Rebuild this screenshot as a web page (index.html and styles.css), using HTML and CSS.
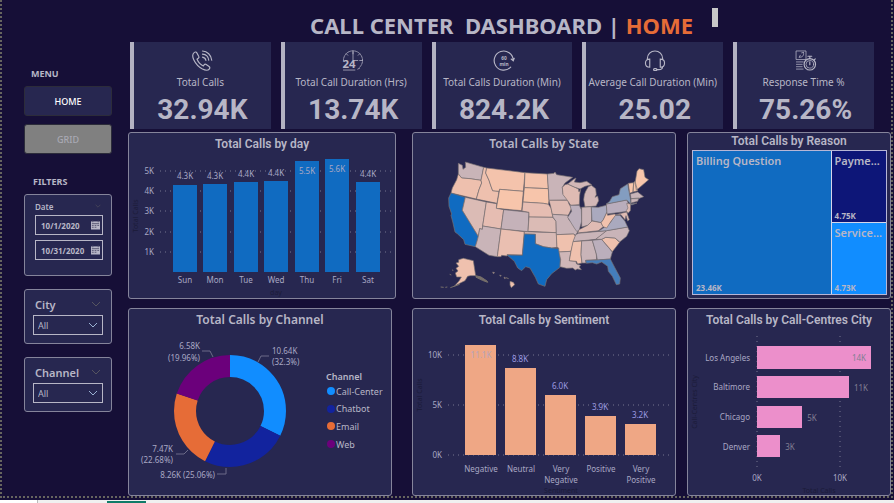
FILE: index.html
```html
<!DOCTYPE html>
<html lang="en">
<head>
<meta charset="utf-8">
<title>Call Center Dashboard</title>
<link rel="stylesheet" href="styles.css">
</head>
<body>
<div class="canvas">
  <aside class="sidebar">
    <h2 class="side-title">MENU</h2>
    <nav class="menu">
      <button class="menu-btn active" type="button">HOME</button>
      <button class="menu-btn" type="button">GRID</button>
    </nav>
    <h2 class="side-title filters-title">FILTERS</h2>
    <section class="filter date-filter">
      <div class="filter-head small"><span>Date</span><svg class="chev" viewBox="0 0 10 6"><path d="M1 1l4 4 4-4"/></svg></div>
      <div class="date-box first">
        <input type="text" aria-label="Start date" value="10/1/2020">
        <svg class="cal" viewBox="0 0 10 10"><path d="M0 1h10v9H0z"/><path class="cut" d="M2 0v2M8 0v2M1 3.500h8M1 5.500h2M4 5.500h2M7 5.500h2M1 7.500h2M4 7.500h2"/></svg>
      </div>
      <div class="date-box">
        <input type="text" aria-label="End date" value="10/31/2020">
        <svg class="cal" viewBox="0 0 10 10"><path d="M0 1h10v9H0z"/><path class="cut" d="M2 0v2M8 0v2M1 3.500h8M1 5.500h2M4 5.500h2M7 5.500h2M1 7.500h2M4 7.500h2"/></svg>
      </div>
    </section>
    <section class="filter">
      <div class="filter-head"><label for="city">City</label><svg class="chev" viewBox="0 0 10 6"><path d="M1 1l4 4 4-4"/></svg></div>
      <div class="select-box"><select id="city"><option>All</option></select><svg class="chev light" viewBox="0 0 10 6"><path d="M1 1l4 4 4-4"/></svg></div>
    </section>
    <section class="filter">
      <div class="filter-head"><label for="channel">Channel</label><svg class="chev" viewBox="0 0 10 6"><path d="M1 1l4 4 4-4"/></svg></div>
      <div class="select-box"><select id="channel"><option>All</option></select><svg class="chev light" viewBox="0 0 10 6"><path d="M1 1l4 4 4-4"/></svg></div>
    </section>
  </aside>

  <main class="main">
    <header class="top">
      <h1>CALL CENTER&nbsp; DASHBOARD | <span>HOME</span></h1>
      <i class="marker"></i>
    </header>

    <section class="kpis">
      <article class="kpi">
        <svg class="icon" viewBox="0 0 22 22"><path d="M3 2.500C1 4 .8 7 2.500 10.500c2 4.200 5 7.300 9 9.500 3.500 1.800 6 1.500 7.300-.3.700-1 .5-1.700-.4-2.400l-3-2.200c-.9-.6-1.600-.4-2.200.4l-.9 1.200C9.500 15.500 7 12.500 5.800 9.700l1.300-1c.8-.6 1-1.300.4-2.200L5.600 3C5 2 4 1.800 3 2.500zM11.500 1c5 .3 9.200 4.300 9.700 9.700M11.500 4.300c3.500.3 6.200 3 6.600 6.400M11.500 7.500c2 .3 3.300 1.600 3.600 3.400"/></svg>
        <h3>Total Calls</h3><strong>32.94K</strong>
      </article>
      <article class="kpi">
        <svg class="icon" viewBox="0 0 22 22"><path class="thin" stroke-dasharray="2 1" d="M1 11A10 10 0 1 1 18 18"/><path class="thin" d="M11 2v9h5M11 1v3M4 4l1.500 1.500M18 4l-1.500 1.500M21 11h-3M1 21h12M16 20l2-1"/><text class="icon-24" x="0" y="19">24</text></svg>
        <h3>Total Call Duration (Hrs)</h3><strong>13.74K</strong>
      </article>
      <article class="kpi">
        <svg class="icon" viewBox="0 0 22 22"><path d="M18 18a10 10 0 1 1 2.700-7.500M18.500 9.500l2.200 1.800 1-2.500"/><text class="icon-60" x="11" y="10">60</text><text class="icon-60" x="11" y="17">min</text></svg>
        <h3>Total Calls Duration (Min)</h3><strong>824.2K</strong>
      </article>
      <article class="kpi">
        <svg class="icon" viewBox="0 0 22 22"><path d="M3 10V9a8 8 0 0 1 16 0v1M5.500 9.500c-3 0-4.500 1.500-4.500 4s1.500 4.500 4.500 4.500zM16.500 9.500c3 0 4.500 1.500 4.500 4s-1.500 4.500-4.500 4.500zM19 17.500c0 2-1.500 3-4 3h-2"/><rect x="9.500" y="19.500" width="3.500" height="2" rx="1"/></svg>
        <h3>Average Call Duration (Min)</h3><strong>25.02</strong>
      </article>
      <article class="kpi">
        <svg class="icon" viewBox="0 0 22 22"><path class="thin" d="M1 1h10v9H1zM1 12.500h7M1 15h6M1 17.500h6M1 20h7M4 7.500c3 .5 5-1.500 4.500-4.500M4 7.500l1-2M6.500 3l2-.5"/><circle cx="15" cy="15" r="6"/><circle class="thin" cx="15" cy="15" r="4"/><path d="M15 9V7M13 6.500h4M15 12.500V15.500M19.500 10.500l1.200-1.200"/></svg>
        <h3>Response Time %</h3><strong>75.26%</strong>
      </article>
    </section>

    <section class="panels">
      <article class="panel by-day">
        <h2 class="din">Total Calls by day</h2>
        <svg class="chart" viewBox="129 155 266 143" role="img" aria-label="Total calls by day">
          <path class="grid" d="M160 171H392M160 191H392M160 211H392M160 232H392M160 252H392"/>
          <g class="axis end"><text x="154" y="174">5K</text><text x="154" y="194">4K</text><text x="154" y="214">3K</text><text x="154" y="235">2K</text><text x="154" y="255">1K</text></g>
          <g class="bars-blue"><rect x="173" y="185" width="24" height="87"/><rect x="203" y="184" width="24" height="88"/><rect x="234" y="182" width="24" height="90"/><rect x="264" y="181" width="24" height="91"/><rect x="295" y="161" width="24" height="111"/><rect x="325" y="159" width="24" height="113"/><rect x="356" y="182" width="24" height="90"/></g>
          <g class="axis mid"><text x="185" y="179">4.3K</text><text x="215" y="179">4.3K</text><text x="246" y="177">4.4K</text><text x="276" y="176">4.4K</text><text x="307" y="174">5.5K</text><text x="337" y="172">5.6K</text><text x="368" y="177">4.4K</text>
          <text x="185" y="283">Sun</text><text x="215" y="283">Mon</text><text x="246" y="283">Tue</text><text x="276" y="283">Wed</text><text x="307" y="283">Thu</text><text x="337" y="283">Fri</text><text x="368" y="283">Sat</text></g>
          <g class="faint"><text x="276" y="295">day</text><text transform="translate(138 216) rotate(-90)">Total Calls</text></g>
        </svg>
      </article>

      <article class="panel">
        <h2>Total Calls by State</h2>
        <svg class="chart map" viewBox="24 81 786 429" role="img" aria-label="Total calls by state">
          <path fill="#c9b4b8" d="M160 106l12 6 2 12 8-6-1-16 55 16-8 39-33-5-25-2-10-12z"/>
          <path fill="#eec0ae" d="M160 138l10 12 25 2 33 5 2 8-8 20-8 28-76-18 4-15 13-25z"/>
          <path fill="#106bc1" d="M138 195l43 13-9 39 48 78-4 15-5 16-31-7-4-14-18-17-8-6-6-27-6-23 2-4-8-23-1-25z"/>
          <path fill="#dbbbb5" d="M181 208l63 14-11 72-1 10-8-2-4 23-48-78z"/>
          <path fill="#eec0ae" d="M236 118l9 2-3 15 10 22 6 18 5 13 19 2-6 36-62-13 8-28 8-20-2-8z"/>
          <path fill="#f4c3ac" d="M245 120l115 14-5 56-71-6-2 6-19-2-5-13-6-18-10-22z"/>
          <path fill="#f7c5ab" d="M284 184l71 6-5 58-76-7z"/>
          <path fill="#e6bdb2" d="M244 222l31 5-1 14 22 4-8 58-55-9z"/>
          <path fill="#c5b2b9" d="M296 245l76 8-3 58-81-8z"/>
          <path fill="#c9b4b8" d="M233 294l55 9-11 83-25-4-41-26 5-16 4-15 4-23 8 2z"/>
          <path fill="#eabfb1" d="M288 303l70 8-6 70-46-1v4l-16-2-2 4h-11z"/>
          <path fill="#f4c3ac" d="M360 134l67 4 3 44-72-3z"/><path fill="#f7c5ab" d="M358 179l72 3 2 36-2 11-15-3-61-4z"/>
          <path fill="#e6bdb2" d="M354 222l61 4 15 3 8 11 6 28-72-1v-14l-21-4z"/><path fill="#dbbbb5" d="M372 267l72 1 9 12 1 34-85-4z"/>
          <path fill="#d7b9b5" d="M358 311l96 3 2 44-16 2-25-4-24-9v-28l-33-1z"/>
          <path fill="#106bc1" d="M358 318l33 1v28l24 9 25 4 22 2 4 33-1 23-25 19-15 18-5 20-20-7-9-20-16-28-13-4-12 12-12-8-10-20-22-19 46 1z"/>
          <path fill="#c9b4b8" d="M427 138l20-2 3-4 5 8 30 5 18 3-23 17-8 13 2 20 14 18-56 1-2-35z"/>
          <path fill="#dfbbb3" d="M432 217h56l4 11 8 12-8 18-4 4-46-3-4-19z"/><path fill="#c9b4b8" d="M442 259l46 3 4 13 16 17 12 16-8 14-6-4-52 2-1-40-9-12z"/>
          <path fill="#efc1ae" d="M454 320l52-2 6 7-7 17-7 28-36 2-1-12-5-2z"/><path fill="#cfb6b7" d="M462 372l36-2-5 28 19 2 3 8 12 4-4 5 6 8-12-2-6 3-8-6-18 1-20-5 2-21z"/>
          <path fill="#dfbbb3" d="M472 178l8-8 8-2 22 10 10 5 2 9 5-8-3 18-1 28-26 2-9-14-14-18z"/>
          <path fill="#d2b7b7" d="M488 168l18-14 7-4-5 12 17 2 20-4 15 10-20 5-15 8-15-5zM542 190l8-14 9-4 13 10 2 18-4 8 8-4 3 14-8 16-33 3-4-22 2-15z"/>
          <path fill="#bcafbc" d="M495 232h28l6 13 1 35-8 28-7 2-7-10-20-32 12-18z"/><path fill="#cbb5b8" d="M530 238l29-2 1 44-12 12-18 5z"/>
          <path fill="#aaa9be" d="M559 237l21 1 24-6 2 20-11 23-7 9-27-6z"/><path fill="#e0bbb3" d="M518 315l4-10 26-13 13-13 27 5 7 12-15 12z"/>
          <path fill="#c9b4b8" d="M512 320l8-4 85-8-20 17-13 9-68 7z"/><path fill="#efc1ae" d="M504 341l26-2-2 41 3 25-13 3-4-8-21-2 5-28z"/>
          <path fill="#c9b4b8" d="M530 339l32-2 12 41 1 17-33 2 1 8h-12l-3-25z"/><path fill="#bbafbc" d="M562 337l28-3 32 38-6 21-39 3-3-18z"/>
          <path fill="#447dbb" d="M542 397l35-1 39-3 14 27 16 30-2 18-10 2-12-25-12-15-2-15-18-13-15 6-13-4-18 2z"/>
          <path fill="#efc1ae" d="M590 334l12-6 28 2 14 13-22 28z"/><path fill="#c9b4b8" d="M572 334l33-26 63-11 5 11-8 17-21 17-14-12-28-2-12 6z"/>
          <path fill="#aaa9be" d="M580 310l15-10 20-15 15-23 15 0 15 18 8 17-63 11z"/><path fill="#f2c2ad" d="M588 284l7-9 11-23 2 10 20-4 5 2-15 20-13 20-11-4z"/>
          <path fill="#b9adbc" d="M604 228l61-12 8 16-5 18-62 8z"/><path fill="#839dc0" d="M614 220l8-14 20-6 4-18 22-14 5 27 4 23 1 10 18-3-16 6-15-15-61 12z"/>
          <path fill="#dfbbb3" d="M665 226l12 2-1 20-7 8-5-8 5-8zM630 260l35-8 8 23-5 4-5-16-3 12-12-15z"/>
          <path fill="#f7c5ab" d="M670 166l16-2-2 28-10 4zM686 164l4-4 8 28-14 4zM690 165l6-35 6-8 14 3 4 23 11 7-29 25-8 6z"/>
          <path fill="#c9b4b8" d="M676 198l22-6 18 14-16 6-22 0zM678 212l24-2-4 10-20 5z"/>
          <path fill="#efc1ae" d="M153 405l8-2 0-8 14-4 30 7 7 45-16 0-8 2-8 13-14 7-18 10 14-16 7-12-14 0-4-12 8-6-6-8 8-6zM315 460l10 3 4 7-10 9-4-8zM297 447l5 3-3 2zM284 441l5 2-3 2zM263 432l6 2-4 3z"/>
          <path class="isles" d="M107 477l9 1M121 478l6-1M136 479l28-10M212 443l16 4 18 12 2 4-16-6-20-10M134 439l5 2M141 426l4 1M303 449l8 3"/>
        </svg>
      </article>

      <article class="panel">
        <h2 class="din reason-title">Total Calls by Reason</h2>
        <div class="treemap">
          <div class="tile billing"><b>Billing Question</b><span>23.46K</span></div>
          <div class="tile payments"><b>Payme...</b><span>4.75K</span></div>
          <div class="tile service"><b>Service...</b><span>4.73K</span></div>
        </div>
      </article>

      <article class="panel by-channel">
        <h2>Total Calls by Channel</h2>
        <svg class="chart" viewBox="129 331 262 164" role="img" aria-label="Total calls by channel">
          <g class="donut" transform="rotate(-90 230 411)">
            <circle cx="230" cy="411" r="45" pathLength="100" stroke="#118dff" stroke-dasharray="32.3 67.7"/>
            <circle cx="230" cy="411" r="45" pathLength="100" stroke="#12239e" stroke-dasharray="25.06 74.94" stroke-dashoffset="-32.3"/>
            <circle cx="230" cy="411" r="45" pathLength="100" stroke="#e66c37" stroke-dasharray="22.68 77.32" stroke-dashoffset="-57.36"/>
            <circle cx="230" cy="411" r="45" pathLength="100" stroke="#6b007b" stroke-dasharray="19.96 80.04" stroke-dashoffset="-80.04"/>
          </g>
          <path class="leader" d="M258 362l3-6h8M202 351h8l3 6M176 454h8l4-4M217 474h9v-6"/>
          <g class="axis"><text x="272" y="354">10.64K</text><text x="272" y="365">(32.3%)</text></g>
          <g class="axis end"><text x="200" y="349">6.58K</text><text x="200" y="361">(19.96%)</text><text x="173" y="452">7.47K</text><text x="173" y="463">(22.68%)</text><text x="215" y="478">8.26K (25.06%)</text></g>
          <g class="legend"><text class="strong" x="326" y="380">Channel</text><text x="336" y="395">Call-Center</text><text x="336" y="412">Chatbot</text><text x="336" y="430">Email</text><text x="336" y="448">Web</text></g>
          <circle cx="331" cy="391" r="4" fill="#118dff"/><circle cx="331" cy="409" r="4" fill="#12239e"/><circle cx="331" cy="426" r="4" fill="#e66c37"/><circle cx="331" cy="444" r="4" fill="#6b007b"/>
        </svg>
      </article>

      <article class="panel">
        <h2 class="din">Total Calls by Sentiment</h2>
        <svg class="chart" viewBox="413 331 262 164" role="img" aria-label="Total calls by sentiment">
          <path class="grid" d="M448 355H672M448 405H672M448 455H672"/>
          <g class="axis end"><text x="442" y="358">10K</text><text x="442" y="408">5K</text><text x="442" y="458">0K</text></g>
          <g class="bars-peach"><rect x="465" y="345" width="31" height="110"/><rect x="505" y="368" width="31" height="87"/><rect x="545" y="395" width="31" height="60"/><rect x="585" y="416" width="31" height="39"/><rect x="625" y="424" width="31" height="31"/></g>
          <g class="axis mid"><text class="on-bar" x="481" y="358">11.1K</text><g class="violet"><text x="520" y="362">8.8K</text><text x="560" y="389">6.0K</text><text x="600" y="410">3.9K</text><text x="640" y="418">3.2K</text></g>
          <text x="481" y="472">Negative</text><text x="521" y="472">Neutral</text><text x="561" y="472">Very</text><text x="561" y="483">Negative</text><text x="601" y="472">Positive</text><text x="641" y="472">Very</text><text x="641" y="483">Positive</text></g>
          <g class="faint"><text x="561" y="493">Sentiment</text><text transform="translate(422 395) rotate(-90)">Total Calls</text></g>
        </svg>
      </article>

      <article class="panel">
        <h2 class="din">Total Calls by Call-Centres City</h2>
        <svg class="chart" viewBox="688 331 202 164" role="img" aria-label="Total calls by call-centre city">
          <path class="grid" d="M757 336V470M840 336V470"/>
          <g class="axis end"><text x="750" y="361">Los Angeles</text><text x="750" y="390">Baltimore</text><text x="750" y="420">Chicago</text><text x="750" y="450">Denver</text></g>
          <g class="bars-pink"><rect x="757" y="346" width="114" height="23"/><rect x="757" y="376" width="92" height="22"/><rect x="757" y="406" width="45" height="22"/><rect x="757" y="435" width="23" height="22"/></g>
          <g class="axis mid gray"><text x="859" y="361">14K</text><text x="861" y="391">11K</text><text x="812" y="421">5K</text><text x="790" y="450">3K</text></g>
          <g class="axis mid"><text x="757" y="481">0K</text><text x="840" y="481">10K</text></g>
          <g class="faint"><text x="819" y="493">Total Calls</text><text transform="translate(697 402) rotate(-90)">Call-Centres City</text></g>
        </svg>
      </article>
    </section>
  </main>
</div>
<footer class="tabs"><i class="tab-blank"></i><i class="tab-idle"></i><i class="tab-active"></i></footer>
</body>
</html>
```
FILE: styles.css
```css
* { box-sizing: border-box; }

body {
  margin: 0;
  min-height: 100vh;
  display: flex;
  flex-direction: column;
  background: #160f37;
  color: #b7b6c6;
  font-family: "Noto Sans", "Open Sans", sans-serif;
}

h1, h2, h3 { margin: 0; }

.canvas {
  flex: 1;
  display: flex;
  gap: 16px;
  margin: 0 1px 2px 0;
  padding-left: 22px;
  border: 2px dotted #66655f;
  border-top: 0;
}

/* Sidebar */
.sidebar { width: 88px; padding-top: 67px; flex: none; }
.side-title { margin-left: 7px; font-size: 9px; line-height: 14px; font-weight: 700; }
.menu { display: flex; flex-direction: column; gap: 8px; margin-top: 5px; }
.menu-btn {
  height: 30px;
  border: 1px solid #2c2c3a;
  border-radius: 3px;
  background: #808080;
  color: #a9a9b4;
  font: 500 9px "Noto Sans", sans-serif;
}
.menu-btn.active { background: #272750; color: #fff; }
.filters-title { margin: 21px 0 5px 9px; }

.filter {
  height: 55px;
  margin-bottom: 13px;
  padding: 5px 8px;
  border: 1px solid #85849b;
  border-radius: 3px;
  background: #272750;
}
.date-filter { height: 82px; }
.filter-head {
  display: flex;
  justify-content: space-between;
  align-items: center;
  padding: 0 2px;
  height: 18px;
  margin-bottom: 2px;
  font-size: 11px;
  font-weight: 600;
}
.filter-head.small { height: 12px; font-size: 8px; margin-bottom: 3px; }
.chev { width: 10px; height: 6px; fill: none; stroke: #55545f; }
.chev.light { stroke: #9bb3d4; }
.small .chev { width: 6px; height: 4px; }

.date-box {
  display: flex;
  align-items: center;
  height: 20px;
  margin: 0 0 5px 2px;
  padding: 0 2px 0 5px;
  border: 1px solid #b7b6c6;
}
.date-box input {
  flex: 1;
  min-width: 0;
  padding: 0;
  border: 0;
  background: none;
  color: inherit;
  font: 700 8px "Noto Sans", sans-serif;
}
.cal { width: 9px; height: 10px; flex: none; fill: #b7b6c6; }
.cal .cut { stroke: #55546f; stroke-width: 1; }

.select-box {
  display: flex;
  align-items: center;
  height: 20px;
  padding-right: 4px;
  border: 1px solid #b7b6c6;
}
.select-box select {
  flex: 1;
  min-width: 0;
  padding: 0 0 0 4px;
  border: 0;
  appearance: none;
  background: none;
  color: inherit;
  font: 9px "Noto Sans", sans-serif;
}

/* Header */
.main { flex: 1; min-width: 0; }
.top { position: relative; height: 42px; padding: 9px 16px 0 0; }
.top h1 { font-size: 22px; line-height: 32px; font-weight: 700; text-align: center; white-space: nowrap; }
.top h1 span { color: #e66c37; }
.marker { position: absolute; top: 8px; right: 173px; width: 6px; height: 19px; background: #c8c8c8; }

/* Headline figures */
.kpis {
  display: grid;
  grid-template-columns: repeat(5, 1fr);
  gap: 10px;
  padding: 0 17px 0 2px;
}
.kpi {
  height: 87px;
  display: flex;
  flex-direction: column;
  align-items: center;
  padding-top: 8px;
  border-left: 4px solid #b3b2c2;
  background: #272750;
}
.kpi h3 { margin: 4px 4px 0 0; font-size: 10px; line-height: 14px; font-weight: 400; white-space: nowrap; }
.kpi strong { margin-top: 2px; font: 700 28px/38px "Roboto", sans-serif; }
.icon { width: 22px; height: 22px; fill: none; stroke: #b7b6c6; stroke-width: 1.2; stroke-linecap: round; }
.icon .thin { stroke-width: 0.8; }
.icon text { fill: #b7b6c6; stroke: none; font-family: "Noto Sans", sans-serif; font-weight: 700; }
.icon-24 { font-size: 12px; }
.icon-60 { font-size: 5px; text-anchor: middle; }

/* Chart panels */
.panels {
  display: grid;
  grid-template-columns: 273fr 264fr 204fr;
  gap: 9px 11px;
  padding-top: 3px;
}
.panel {
  display: flex;
  flex-direction: column;
  min-width: 0;
  border: 1px solid #85849b;
  border-radius: 3px;
  background: #272750;
}
.by-day { margin-right: 5px; }
.by-channel { margin-right: 9px; }
.panel h2 {
  height: 22px;
  font-size: 12px;
  line-height: 22px;
  font-weight: 600;
  text-align: center;
  white-space: nowrap;
}
.panel h2.din { font-family: "Roboto", sans-serif; font-weight: 600; }
.panel h2.reason-title { height: 17px; line-height: 17px; }
.chart { display: block; width: 100%; }

.chart text { fill: #a9a8c4; font-family: "Noto Sans", sans-serif; font-size: 8px; }
.end { text-anchor: end; }
.mid { text-anchor: middle; }
.grid { fill: none; stroke: #77768f; stroke-dasharray: 1 4; }
.chart .faint text { fill: #1b1b38; text-anchor: middle; font-size: 7px; }
.bars-blue { fill: #106bc1; }
.bars-peach { fill: #efa785; }
.bars-pink { fill: #ec8fcb; }
.chart .on-bar { fill: #b5a3ba; }
.chart .violet text { fill: #9b9ae0; }
.chart .gray text { fill: #817f93; }
.map path { stroke: #777071; stroke-width: 2; stroke-linejoin: round; }
.map .isles { fill: #77706b; stroke: #77706b; stroke-width: 3; }
.donut circle { fill: none; stroke-width: 22; }
.leader { fill: none; stroke: #6c6b88; }
.chart .legend text { font-size: 9px; fill: #b7b6c6; }
.chart .legend .strong { font-weight: 600; }

.treemap {
  flex: 1;
  display: grid;
  grid-template-columns: 139fr 55fr;
  grid-template-rows: 1fr 1fr;
  gap: 1px;
  margin: 0 3px 3px 4px;
  border: 1px solid #b7b6d6;
  background: #d6d6ea;
}
.tile {
  display: flex;
  flex-direction: column;
  justify-content: space-between;
  min-width: 0;
  padding: 2px 3px;
  font-weight: 700;
  white-space: nowrap;
}
.tile b { font-size: 11px; line-height: 16px; font-weight: 600; }
.tile span { font-size: 8px; line-height: 9px; }
.billing { grid-row: span 2; background: #106bc1; }
.payments { background: #0d1678; }
.service { background: #118dff; }

/* Page tab strip */
.tabs { display: flex; height: 3px; background: #f0f0f0; }
.tab-blank { width: 38px; background: #fff; border-right: 1px solid #bbb; }
.tab-idle { width: 69px; }
.tab-active { width: 39px; border-bottom: 2px solid #0f7b68; }
```
